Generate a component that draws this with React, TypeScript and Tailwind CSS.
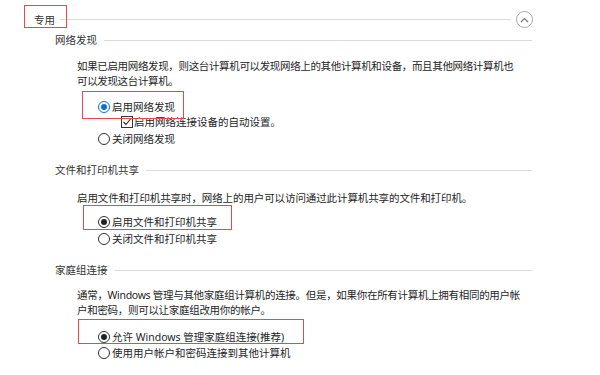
import React from "react";

const FONT = { fontFamily: '"Noto Sans", "Noto Sans CJK SC", sans-serif' };

function Radio({ kind }: { kind: "focus" | "on" | "off" }) {
  const ring =
    kind === "focus" ? "border-[#0a6fd1]" : "border-[#333333]";
  return (
    <span
      className={`w-[12px] h-[12px] rounded-full border ${ring} bg-white flex items-center justify-center shrink-0`}
    >
      {kind === "focus" && <span className="w-[6px] h-[6px] rounded-full bg-[#0a6fd1]" />}
      {kind === "on" && <span className="w-[6px] h-[6px] rounded-full bg-[#222222]" />}
    </span>
  );
}

function SectionHeader({ title, className }: { title: string; className: string }) {
  return (
    <div className={`flex items-center h-[14px] pl-[55px] pr-[68px] ${className}`}>
      <span className="text-[#333333] leading-[14px]">{title}</span>
      <div className="flex-1 h-px bg-[#dadada] ml-[7px]" />
    </div>
  );
}

export default function App() {
  return (
    <div
      className="w-[600px] h-[375px] bg-white relative overflow-hidden text-[10.5px] text-[#1e1e1e]"
      style={FONT}
    >
      {/* Top: 专用 */}
      <div className="relative flex items-center h-[17px] mt-[11px] pl-[34px] pr-[67px]">
        <span className="text-[#333333] leading-[14px]">专用</span>
        <div className="flex-1 h-px bg-[#dadada] ml-[5px]" />
        <div className="ml-[5px] w-[17px] h-[17px] rounded-full border border-[#a8a8a8] flex items-center justify-center">
          <svg width="9" height="6" viewBox="0 0 9 6" fill="none">
            <path d="M1 5 L4.5 1.5 L8 5" stroke="#7a7a7a" strokeWidth="1.2" />
          </svg>
        </div>
        <div className="absolute left-[24px] top-[-6px] w-[43px] h-[23px] border border-[#e5484d]" />
      </div>

      {/* 网络发现 */}
      <SectionHeader title="网络发现" className="mt-[5px]" />
      <div className="pl-[77px] mt-[12px] leading-[15px] tracking-[-0.35px]">
        如果已启用网络发现，则这台计算机可以发现网络上的其他计算机和设备，而且其他网络计算机也
        <br />
        可以发现这台计算机。
      </div>
      <div className="relative flex items-center h-[14px] mt-[11px] pl-[98px] gap-[2px]">
        <Radio kind="focus" />
        <span className="leading-[14px]">启用网络发现</span>
        <div className="absolute left-[82px] top-[-9px] w-[102px] h-[28px] border border-[#e5484d]" />
      </div>
      <div className="flex items-center h-[14px] mt-[1px] pl-[121px] gap-[1px]">
        <span className="w-[12px] h-[12px] border border-[#333333] bg-white flex items-center justify-center shrink-0">
          <svg width="10" height="10" viewBox="0 0 10 10" fill="none">
            <path d="M1.5 5 L4 7.5 L8.5 2" stroke="#222222" strokeWidth="1.1" />
          </svg>
        </span>
        <span className="leading-[14px]">启用网络连接设备的自动设置。</span>
      </div>
      <div className="flex items-center h-[14px] mt-[3px] pl-[98px] gap-[2px]">
        <Radio kind="off" />
        <span className="leading-[14px]">关闭网络发现</span>
      </div>

      {/* 文件和打印机共享 */}
      <SectionHeader title="文件和打印机共享" className="mt-[17px]" />
      <div className="pl-[77px] mt-[14px] leading-[14px] tracking-[-0.1px]">
        启用文件和打印机共享时，网络上的用户可以访问通过此计算机共享的文件和打印机。
      </div>
      <div className="relative flex items-center h-[14px] mt-[10px] pl-[98px] gap-[2px]">
        <Radio kind="on" />
        <span className="leading-[14px]">启用文件和打印机共享</span>
        <div className="absolute left-[83px] top-[-10px] w-[149px] h-[25px] border border-[#e5484d]" />
      </div>
      <div className="flex items-center h-[14px] mt-[3px] pl-[98px] gap-[2px]">
        <Radio kind="off" />
        <span className="leading-[14px]">关闭文件和打印机共享</span>
      </div>

      {/* 家庭组连接 */}
      <SectionHeader title="家庭组连接" className="mt-[17px]" />
      <div className="pl-[77px] mt-[11px] leading-[15px] tracking-[-0.3px]">
        通常，Windows 管理与其他家庭组计算机的连接。但是，如果你在所有计算机上拥有相同的用户帐
        <br />
        户和密码，则可以让家庭组改用你的帐户。
      </div>
      <div className="relative flex items-center h-[14px] mt-[12px] pl-[98px] gap-[2px]">
        <Radio kind="on" />
        <span className="leading-[14px]">允许 Windows 管理家庭组连接(推荐)</span>
        <div className="absolute left-[78px] top-[-11px] w-[226px] h-[25px] border border-[#e5484d]" />
      </div>
      <div className="flex items-center h-[14px] mt-[2px] pl-[98px] gap-[2px]">
        <Radio kind="off" />
        <span className="leading-[14px]">使用用户帐户和密码连接到其他计算机</span>
      </div>
    </div>
  );
}
